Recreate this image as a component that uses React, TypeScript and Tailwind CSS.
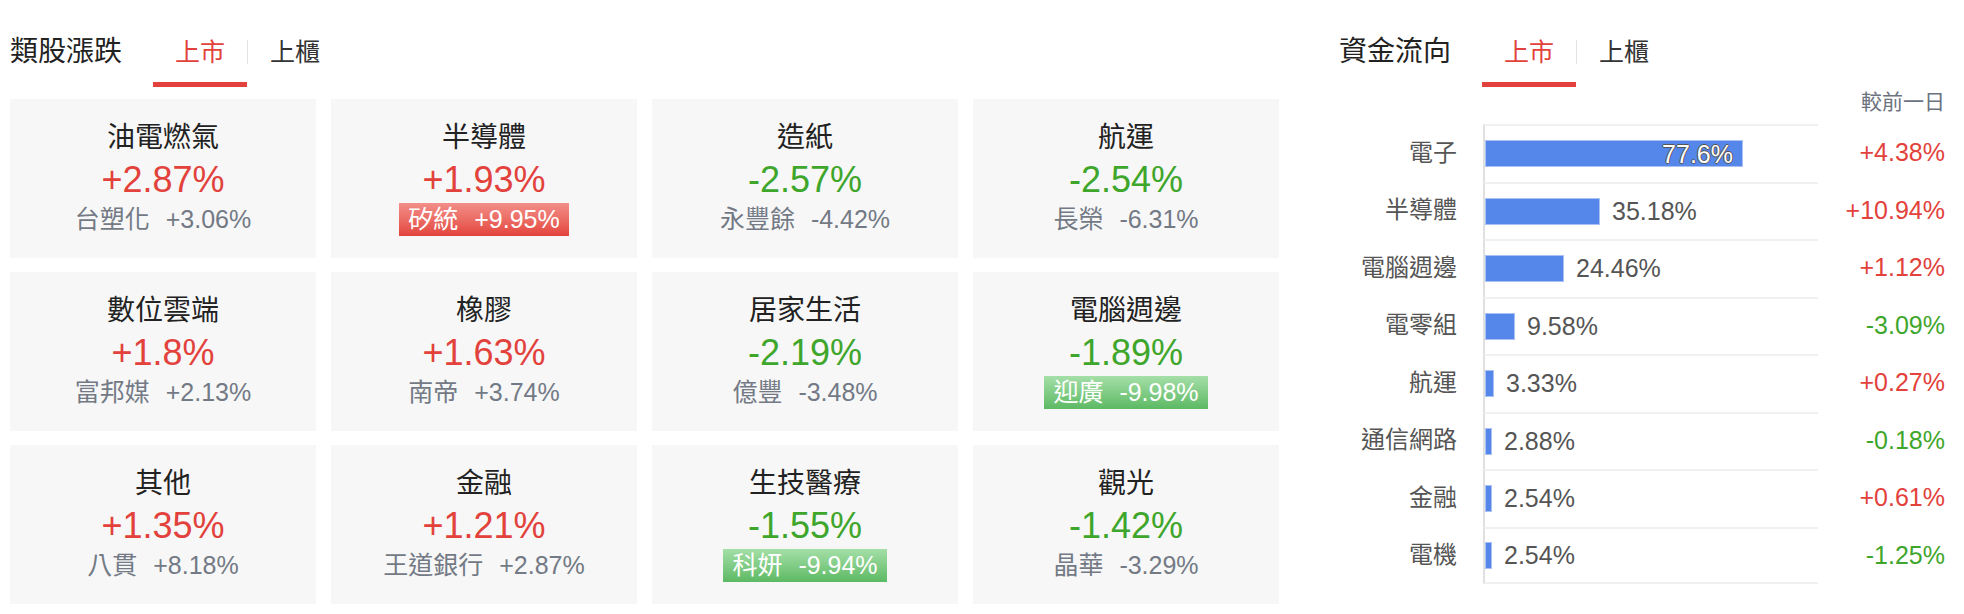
import React from "react";

type Sector = {
  name: string;
  pct: string;
  up: boolean;
  stock: string;
  stockPct: string;
  badge?: "up" | "down";
};

const sectors: Sector[] = [
  { name: "油電燃氣", pct: "+2.87%", up: true, stock: "台塑化", stockPct: "+3.06%" },
  { name: "半導體", pct: "+1.93%", up: true, stock: "矽統", stockPct: "+9.95%", badge: "up" },
  { name: "造紙", pct: "-2.57%", up: false, stock: "永豐餘", stockPct: "-4.42%" },
  { name: "航運", pct: "-2.54%", up: false, stock: "長榮", stockPct: "-6.31%" },
  { name: "數位雲端", pct: "+1.8%", up: true, stock: "富邦媒", stockPct: "+2.13%" },
  { name: "橡膠", pct: "+1.63%", up: true, stock: "南帝", stockPct: "+3.74%" },
  { name: "居家生活", pct: "-2.19%", up: false, stock: "億豐", stockPct: "-3.48%" },
  { name: "電腦週邊", pct: "-1.89%", up: false, stock: "迎廣", stockPct: "-9.98%", badge: "down" },
  { name: "其他", pct: "+1.35%", up: true, stock: "八貫", stockPct: "+8.18%" },
  { name: "金融", pct: "+1.21%", up: true, stock: "王道銀行", stockPct: "+2.87%" },
  { name: "生技醫療", pct: "-1.55%", up: false, stock: "科妍", stockPct: "-9.94%", badge: "down" },
  { name: "觀光", pct: "-1.42%", up: false, stock: "晶華", stockPct: "-3.29%" },
];

type Flow = { label: string; share: string; width: number; change: string; up: boolean };

const flows: Flow[] = [
  { label: "電子", share: "77.6%", width: 258, change: "+4.38%", up: true },
  { label: "半導體", share: "35.18%", width: 115, change: "+10.94%", up: true },
  { label: "電腦週邊", share: "24.46%", width: 79, change: "+1.12%", up: true },
  { label: "電零組", share: "9.58%", width: 30, change: "-3.09%", up: false },
  { label: "航運", share: "3.33%", width: 9, change: "+0.27%", up: true },
  { label: "通信網路", share: "2.88%", width: 7, change: "-0.18%", up: false },
  { label: "金融", share: "2.54%", width: 7, change: "+0.61%", up: true },
  { label: "電機", share: "2.54%", width: 7, change: "-1.25%", up: false },
];

function Header({ title }: { title: string }) {
  return (
    <div className="flex items-start h-[87px] pt-[28px]">
      <div className="text-[28px] leading-[48px] text-[#222]">{title}</div>
      <div className="ml-[31px] flex">
        <div className="w-[94px] flex flex-col items-center">
          <div className="text-[25px] leading-[48px] text-[#e2423b]">上市</div>
          <div className="mt-[6px] h-[5px] w-full bg-[#e2423b]" />
        </div>
        <div className="mt-[12px] w-px h-[24px] bg-[#e3e3e3]" />
        <div className="w-[94px] flex flex-col items-center">
          <div className="text-[25px] leading-[48px] text-[#333]">上櫃</div>
        </div>
      </div>
    </div>
  );
}

function SectorCard({ s }: { s: Sector }) {
  return (
    <div className="h-[159px] bg-[#f7f7f7] flex flex-col items-center justify-center pb-[2px]">
      <div className="text-[28px] leading-[40px] text-[#222]">{s.name}</div>
      <div
        className={
          s.up
            ? "text-[36px] leading-[44px] text-[#e2423b]"
            : "text-[36px] leading-[44px] text-[#3fa62c]"
        }
      >
        {s.pct}
      </div>
      {s.badge ? (
        <div className="h-[36px] flex items-center">
          <div
            className={
              s.badge === "up"
                ? "h-[33px] px-[9px] flex items-center gap-[16px] text-[25px] leading-none text-white bg-linear-to-b from-[#f28e89] to-[#e2433c]"
                : "h-[33px] px-[9px] flex items-center gap-[16px] text-[25px] leading-none text-white bg-linear-to-b from-[#a4dfa8] to-[#5cb963]"
            }
          >
            <span>{s.stock}</span>
            <span>{s.stockPct}</span>
          </div>
        </div>
      ) : (
        <div className="h-[36px] flex items-center gap-[16px] text-[25px] leading-none text-[#737a85]">
          <span>{s.stock}</span>
          <span>{s.stockPct}</span>
        </div>
      )}
    </div>
  );
}

function FlowRow({ f, last }: { f: Flow; last: boolean }) {
  return (
    <div className="flex items-stretch h-[57.5px]">
      <div className="w-[118px] flex items-center justify-end text-[24px] text-[#555]">{f.label}</div>
      <div
        className={
          last
            ? "ml-[26px] w-[335px] flex items-center border-l-2 border-l-[#e0e0e0] border-t-2 border-t-[#f0f0f0] border-b-2 border-b-[#f0f0f0]"
            : "ml-[26px] w-[335px] flex items-center border-l-2 border-l-[#e0e0e0] border-t-2 border-t-[#f0f0f0]"
        }
      >
        <div
          className="relative h-[27px] bg-[#5586ea] border border-[#a9c1f3] shrink-0"
          style={{ width: f.width }}
        >
          {f.width > 150 && (
            <span className="absolute right-[9px] top-1/2 -translate-y-1/2 text-[25px] leading-none text-white [text-shadow:1px_0_#555,-1px_0_#555,0_1px_#555,0_-1px_#555]">
              {f.share}
            </span>
          )}
        </div>
        {f.width <= 150 && (
          <span className="ml-[12px] text-[25px] leading-none text-[#555]">{f.share}</span>
        )}
      </div>
      <div
        className={
          f.up
            ? "flex-1 flex items-center justify-end text-[25px] text-[#e2423b]"
            : "flex-1 flex items-center justify-end text-[25px] text-[#3fa62c]"
        }
      >
        {f.change}
      </div>
    </div>
  );
}

export default function App() {
  return (
    <div className="w-[1964px] h-[614px] bg-white flex font-['Liberation_Sans','Noto_Sans_CJK_TC',sans-serif] overflow-hidden">
      <section className="pl-[10px] w-[1279px]">
        <Header title="類股漲跌" />
        <div className="mt-[12px] grid grid-cols-[repeat(4,306px)] gap-x-[15px] gap-y-[14px]">
          {sectors.map((s) => (
            <SectorCard key={s.name} s={s} />
          ))}
        </div>
      </section>
      <section className="ml-[60px] w-[606px]">
        <Header title="資金流向" />
        <div className="h-[30px] text-right text-[21px] leading-[30px] text-[#6b7280]">較前一日</div>
        <div className="mt-[7px]">
          {flows.map((f, i) => (
            <FlowRow key={f.label} f={f} last={i === flows.length - 1} />
          ))}
        </div>
      </section>
    </div>
  );
}
